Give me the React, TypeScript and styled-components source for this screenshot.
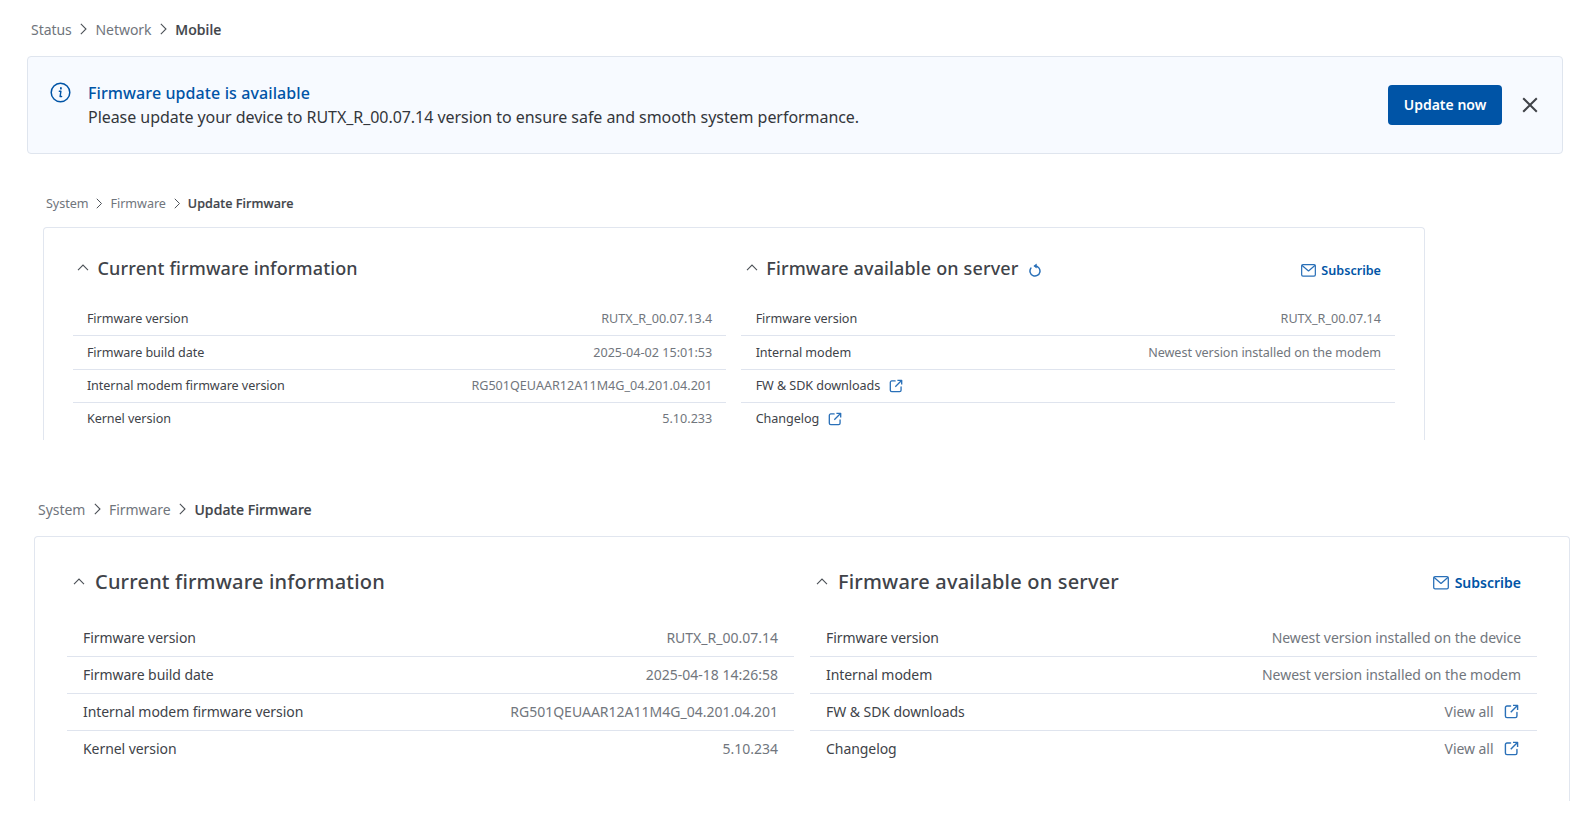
import React from "react";
import styled, { createGlobalStyle } from "styled-components";

const Global = createGlobalStyle`
  html, body { margin: 0; padding: 0; background: #fff; }
  body { font-family: "Noto Sans", "Open Sans", sans-serif; color: #404349; }
`;

const Page = styled.div`
  width: 1582px;
  height: 834px;
  overflow: hidden;
  padding-top: 19px;
  box-sizing: border-box;
`;

const Crumbs = styled.nav<{ $size: number; $left: number; $top: number; $gap: number }>`
  display: flex;
  align-items: center;
  gap: ${(p) => p.$gap}px;
  height: ${(p) => (p.$size > 13 ? 20 : 18)}px;
  margin: ${(p) => p.$top}px 0 0 ${(p) => p.$left}px;
  font-size: ${(p) => p.$size}px;
  letter-spacing: -0.05px;
  color: #70757c;
`;

const CrumbCurrent = styled.span`
  color: #404349;
  font-weight: 500;
  letter-spacing: 0.08px;
  -webkit-text-stroke: 0.2px #404349;
`;

const CrumbArrow = styled.svg`
  flex: none;
  color: #4c5157;
`;

const Banner = styled.section`
  display: flex;
  align-items: center;
  box-sizing: border-box;
  width: 1536px;
  height: 97.5px;
  margin: 17px 0 0 27px;
  padding: 0 24px 0 22px;
  background: #f7faff;
  border: 1px solid #dfe5ee;
  border-radius: 4px;
`;

const BannerIcon = styled.svg`
  flex: none;
  color: #0054a6;
  margin: 25px 17.5px 0 -0.5px;
  align-self: flex-start;
`;

const BannerText = styled.div`
  flex: 1;
  font-size: 16px;
  line-height: 24px;
  letter-spacing: -0.05px;
  color: #33363b;
`;

const BannerTitle = styled.div`
  color: #0054a6;
  font-weight: 500;
  letter-spacing: 0.1px;
`;

const UpdateButton = styled.button`
  width: 114px;
  height: 40px;
  border: 0;
  border-radius: 4px;
  background: #0054a6;
  color: #fff;
  font: 600 14px "Noto Sans", sans-serif;
`;

const CloseButton = styled.button`
  display: flex;
  padding: 0;
  margin-left: 20px;
  border: 0;
  background: none;
  color: #404349;
`;

const Card = styled.section<{ $left: number; $width: number; $height: number; $top: number; $padL: number; $padR: number; $gap: number }>`
  display: grid;
  grid-template-columns: 1fr 1fr;
  column-gap: ${(p) => p.$gap}px;
  align-items: start;
  box-sizing: border-box;
  width: ${(p) => p.$width}px;
  height: ${(p) => p.$height}px;
  margin: ${(p) => p.$top}px 0 0 ${(p) => p.$left}px;
  padding: 0 ${(p) => p.$padR}px 0 ${(p) => p.$padL}px;
  border: 1px solid #e1e6ef;
  border-bottom: 0;
  border-radius: 4px 4px 0 0;
  overflow: hidden;
`;

const Column = styled.div``;

const Head = styled.header<{ $compact: boolean }>`
  display: flex;
  align-items: center;
  height: ${(p) => (p.$compact ? 74.5 : 83.5)}px;
  padding: ${(p) => (p.$compact ? "5px 14px 0 4.5px" : "5px 16px 0 5.5px")};
  box-sizing: border-box;
`;

const Chevron = styled.svg<{ $compact: boolean }>`
  flex: none;
  color: #4c5157;
  margin-right: ${(p) => (p.$compact ? 8.5 : 10.5)}px;
`;

const Title = styled.h2<{ $compact: boolean }>`
  margin: 0;
  font-size: ${(p) => (p.$compact ? 18 : 20)}px;
  font-weight: 500;
  letter-spacing: ${(p) => (p.$compact ? 0.14 : 0.18)}px;
  color: #404349;
  white-space: nowrap;
`;

const Refresh = styled.svg`
  flex: none;
  margin: 5px 0 0 9px;
  color: #2a70b8;
`;

const Subscribe = styled.a<{ $compact: boolean }>`
  display: flex;
  align-items: center;
  gap: ${(p) => (p.$compact ? 5 : 6)}px;
  margin: ${(p) => (p.$compact ? 6 : 3)}px 0 0 auto;
  font-size: ${(p) => (p.$compact ? 12.6 : 14)}px;
  font-weight: 600;
  color: #0054a6;
`;

const Row = styled.div<{ $compact: boolean }>`
  display: flex;
  align-items: center;
  justify-content: space-between;
  box-sizing: border-box;
  height: ${(p) => (p.$compact ? 33.6 : 36.8)}px;
  padding: ${(p) => (p.$compact ? "0 14px 0 14.4px" : "0 16px 1px")};
  font-size: ${(p) => (p.$compact ? 12.6 : 14)}px;
  border-bottom: 1px solid #dfe4ee;
  &:last-child {
    border-bottom: 0;
    padding-bottom: ${(p) => (p.$compact ? 3 : 1)}px;
  }
`;

const Label = styled.span`
  display: flex;
  align-items: center;
  color: #404349;
  letter-spacing: -0.06px;
`;

const Value = styled.span<{ $prose: boolean }>`
  display: flex;
  align-items: center;
  color: #71767d;
  letter-spacing: ${(p) => (p.$prose ? "-0.05px" : "0")};
`;

const ExtIcon = styled.svg<{ $compact: boolean; $inValue: boolean }>`
  flex: none;
  margin-left: ${(p) => (p.$compact ? 8.5 : 10)}px;
  margin-right: ${(p) => (p.$inValue ? 2.5 : 0)}px;
  color: #2a70b8;
`;

const Ext = ({ compact, inValue }: { compact: boolean; inValue?: boolean }) => {
  const s = compact ? 14 : 15;
  return (
    <ExtIcon $compact={compact} $inValue={!!inValue} width={s} height={s} viewBox="0 0 16 16" fill="none" stroke="currentColor" strokeWidth="1.5" strokeLinejoin="round">
      <path d="M7 2.2H3.2A1.7 1.7 0 0 0 1.5 3.9v8.9a1.7 1.7 0 0 0 1.7 1.7h8.9a1.7 1.7 0 0 0 1.7-1.7V9" strokeLinecap="round" />
      <path d="M9.6 1.5h4.9v4.9M14.3 1.7 7.2 8.8" />
    </ExtIcon>
  );
};

const Mail = ({ size }: { size: number }) => (
  <svg width={size} height={size * 0.85} viewBox="0 0 16 13.6" fill="none" stroke="#2a70b8" strokeWidth="1.3" strokeLinejoin="round" strokeLinecap="round" style={{ flex: "none" }}>
    <rect x="0.7" y="0.7" width="14.6" height="12.2" rx="1.4" />
    <path d="M1.2 1.6 8 7.4l6.8-5.8" />
  </svg>
);

const Arrow = ({ size }: { size: number }) => (
  <CrumbArrow width={size * 0.6} height={size} viewBox="0 0 6 10" fill="none" stroke="currentColor" strokeWidth="0.9">
    <path d="M0.7 0.7 5 5 0.7 9.3" />
  </CrumbArrow>
);

const Up = ({ compact }: { compact: boolean }) => (
  <Chevron $compact={compact} width={12} height={7} viewBox="0 0 12 7" fill="none" stroke="currentColor" strokeWidth="1.1">
    <path d="M1 6.2 6 1l5 5.2" />
  </Chevron>
);

type RowData = { label: string; value?: string; labelExt?: boolean; valueExt?: boolean };

const InfoColumn = ({ title, compact, refresh, subscribe, rows }: { title: string; compact: boolean; refresh?: boolean; subscribe?: boolean; rows: RowData[] }) => (
  <Column>
    <Head $compact={compact}>
      <Up compact={compact} />
      <Title $compact={compact}>{title}</Title>
      {refresh && (
        <Refresh width={14} height={14} viewBox="0 0 14 14" fill="none" stroke="currentColor" strokeWidth="1.5" strokeLinejoin="round">
          <path d="M7 3a5 5 0 1 1-4.1 2.1" strokeLinecap="round" />
          <path d="M8.4 1 5.8 3l2.6 2z" fill="currentColor" strokeWidth="0.6" />
        </Refresh>
      )}
      {subscribe && (
        <Subscribe $compact={compact}>
          <Mail size={compact ? 15 : 16} />
          Subscribe
        </Subscribe>
      )}
    </Head>
    {rows.map((r) => (
      <Row key={r.label} $compact={compact}>
        <Label>
          {r.label}
          {r.labelExt && <Ext compact={compact} />}
        </Label>
        {r.value && (
          <Value $prose={/[a-z]{3}/.test(r.value)}>
            {r.value}
            {r.valueExt && <Ext compact={compact} inValue />}
          </Value>
        )}
      </Row>
    ))}
  </Column>
);

const Breadcrumb = ({ items, size, left, top, gap, arrow }: { items: string[]; size: number; left: number; top: number; gap: number; arrow: number }) => (
  <Crumbs $size={size} $left={left} $top={top} $gap={gap}>
    {items.map((t, i) =>
      i === items.length - 1 ? (
        <CrumbCurrent key={t}>{t}</CrumbCurrent>
      ) : (
        <React.Fragment key={t}>
          <span>{t}</span>
          <Arrow size={arrow} />
        </React.Fragment>
      )
    )}
  </Crumbs>
);

export default function App() {
  return (
    <Page>
      <Global />
      <Breadcrumb items={["Status", "Network", "Mobile"]} size={14} left={31} top={0} gap={8.3} arrow={12} />
      <Banner>
        <BannerIcon width={21} height={21} viewBox="0 0 21 21" fill="none" stroke="currentColor">
          <circle cx="10.5" cy="10.5" r="9.3" strokeWidth="1.5" />
          <path d="M10.9 5.8v.9" strokeWidth="1.8" strokeLinecap="round" />
          <path d="M9.3 9.3h1.6l-.8 5.2h1.5" strokeWidth="1.4" strokeLinecap="round" strokeLinejoin="round" />
        </BannerIcon>
        <BannerText>
          <BannerTitle>Firmware update is available</BannerTitle>
          Please update your device to RUTX_R_00.07.14 version to ensure safe and smooth system performance.
        </BannerText>
        <UpdateButton>Update now</UpdateButton>
        <CloseButton aria-label="Close">
          <svg width="16" height="16" viewBox="0 0 16 16" fill="none" stroke="currentColor" strokeWidth="2">
            <path d="M1.2 1.2 14.8 14.8M14.8 1.2 1.2 14.8" />
          </svg>
        </CloseButton>
      </Banner>

      <Breadcrumb items={["System", "Firmware", "Update Firmware"]} size={12.6} left={46} top={40.5} gap={7.7} arrow={11} />
      <Card $left={43} $width={1382} $height={213} $top={15} $padL={28.5} $padR={29} $gap={15}>
        <InfoColumn
          title="Current firmware information"
          compact
          rows={[
            { label: "Firmware version", value: "RUTX_R_00.07.13.4" },
            { label: "Firmware build date", value: "2025-04-02 15:01:53" },
            { label: "Internal modem firmware version", value: "RG501QEUAAR12A11M4G_04.201.04.201" },
            { label: "Kernel version", value: "5.10.233" },
          ]}
        />
        <InfoColumn
          title="Firmware available on server"
          compact
          refresh
          subscribe
          rows={[
            { label: "Firmware version", value: "RUTX_R_00.07.14" },
            { label: "Internal modem", value: "Newest version installed on the modem" },
            { label: "FW & SDK downloads", labelExt: true },
            { label: "Changelog", labelExt: true },
          ]}
        />
      </Card>

      <Breadcrumb items={["System", "Firmware", "Update Firmware"]} size={14} left={38} top={59} gap={8.3} arrow={12} />
      <Card $left={34} $width={1536} $height={265} $top={17} $padL={32} $padR={32} $gap={16}>
        <InfoColumn
          title="Current firmware information"
          compact={false}
          rows={[
            { label: "Firmware version", value: "RUTX_R_00.07.14" },
            { label: "Firmware build date", value: "2025-04-18 14:26:58" },
            { label: "Internal modem firmware version", value: "RG501QEUAAR12A11M4G_04.201.04.201" },
            { label: "Kernel version", value: "5.10.234" },
          ]}
        />
        <InfoColumn
          title="Firmware available on server"
          compact={false}
          subscribe
          rows={[
            { label: "Firmware version", value: "Newest version installed on the device" },
            { label: "Internal modem", value: "Newest version installed on the modem" },
            { label: "FW & SDK downloads", value: "View all", valueExt: true },
            { label: "Changelog", value: "View all", valueExt: true },
          ]}
        />
      </Card>
    </Page>
  );
}
